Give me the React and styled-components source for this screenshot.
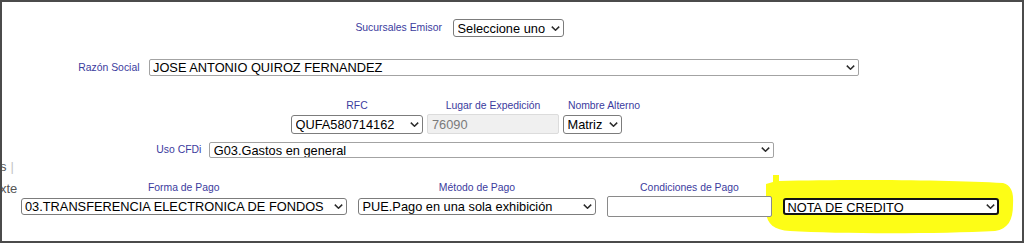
import styled, { createGlobalStyle } from 'styled-components';

const GlobalStyle = createGlobalStyle`
  html, body {
    margin: 0;
    padding: 0;
    background: #ffffff;
    font-family: "Liberation Sans", Arial, sans-serif;
  }
`;

const Frame = styled.div`
  position: relative;
  box-sizing: border-box;
  width: 1024px;
  height: 243px;
  border: 2px solid #4b4b4b;
  overflow: hidden;
  background: #ffffff;
`;

const FieldRow = styled.div`
  display: grid;
  grid-template-columns: ${(p) => p.$labelWidth}px auto;
  column-gap: ${(p) => p.$gap}px;
  align-items: center;
  margin-top: ${(p) => p.$top}px;
`;

const Label = styled.span`
  display: block;
  font-size: 10.4px;
  line-height: 12px;
  color: ${(p) => p.$color || '#3b3b9e'};
  text-align: ${(p) => p.$align || 'right'};
  white-space: nowrap;
`;

const SelectBox = styled.div`
  position: relative;
  z-index: 2;
  display: inline-flex;
  width: ${(p) => p.$w}px;
  height: ${(p) => p.$h}px;
`;

const NativeSelect = styled.select`
  appearance: none;
  -webkit-appearance: none;
  box-sizing: border-box;
  width: 100%;
  height: 100%;
  margin: 0;
  padding: 0 16px 0 ${(p) => (p.$focused ? 2.5 : 3.5)}px;
  font-family: "Liberation Sans", Arial, sans-serif;
  font-size: 12.8px;
  line-height: normal;
  color: #000000;
  background: #ffffff;
  border: ${(p) => (p.$focused ? '2px solid #151515' : `1px solid ${p.$wide ? '#a3a3a3' : '#7c7c7c'}`)};
  border-radius: ${(p) => (p.$wide ? 2 : 3)}px;
  outline: none;
`;

const Chevron = styled.svg`
  position: absolute;
  right: 4px;
  top: 50%;
  margin-top: -2.5px;
  pointer-events: none;
`;

function Select({ w, h, wide, focused, children }) {
  return (
    <SelectBox $w={w} $h={h}>
      <NativeSelect $wide={wide} $focused={focused} defaultValue="a">
        {children}
      </NativeSelect>
      <Chevron width="9" height="5" viewBox="0 0 9 5">
        <path d="M0.8 0.6 L4.5 4.2 L8.2 0.6" fill="none" stroke="#2b2b2b" strokeWidth="1.5" />
      </Chevron>
    </SelectBox>
  );
}

const TextInput = styled.input`
  position: relative;
  z-index: 2;
  box-sizing: border-box;
  width: ${(p) => p.$w}px;
  height: ${(p) => p.$h || 20}px;
  margin: 0;
  padding: 0 4px;
  font-family: "Liberation Sans", Arial, sans-serif;
  font-size: 12.8px;
  color: #000000;
  background: #ffffff;
  border: 1px solid #8a8a8a;
  border-radius: 2px;
  outline: none;

  &:disabled {
    color: #7a7a7a;
    background: #f0f0f0;
    border-color: #dcdcdc;
  }
`;

const ColumnsRow = styled.div`
  display: flex;
  gap: ${(p) => p.$gap}px;
  padding-left: ${(p) => p.$left}px;
  margin-top: ${(p) => p.$top}px;
`;

const Column = styled.div`
  display: flex;
  flex-direction: column;
  width: ${(p) => p.$w}px;
  align-items: ${(p) => p.$controlAlign || 'center'};
`;

const ControlSlot = styled.div`
  display: flex;
  align-items: center;
  height: ${(p) => p.$h}px;
  margin-top: ${(p) => p.$gap}px;
`;

const ColLabel = styled(Label)`
  align-self: stretch;
  text-align: center;
`;

const EdgeText = styled.span`
  position: absolute;
  left: -2px;
  top: ${(p) => p.$top}px;
  z-index: 3;
  font-size: 13px;
  line-height: 14px;
  color: #555555;
  white-space: nowrap;

  i {
    font-style: normal;
    color: #c4c4c4;
    margin-left: 4px;
  }
`;

const Highlight = styled.svg`
  position: absolute;
  left: 758px;
  top: 168px;
  z-index: 1;
  pointer-events: none;
`;

export default function App() {
  return (
    <>
      <GlobalStyle />
      <Frame>
        <Highlight width="262" height="70" viewBox="760 170 262 70">
          <path
            d="M 766 184 L 773 182 L 773 175 L 779 175 L 779 181 C 850 179, 950 180, 1003 183 C 1011 185, 1014 192, 1013 205 C 1013 220, 1008 229, 995 231 C 940 234, 840 234, 790 231 C 774 230, 767 224, 766 212 Z"
            fill="#fdfd16"
          />
        </Highlight>

        <EdgeText $top={158}>s<i>|</i></EdgeText>
        <EdgeText $top={180}>xte</EdgeText>

        <FieldRow $labelWidth={440} $gap={11} $top={17}>
          <Label>Sucursales Emisor</Label>
          <Select w={111} h={18}>
            <option value="a">Seleccione uno</option>
          </Select>
        </FieldRow>

        <FieldRow $labelWidth={137.5} $gap={9} $top={22}>
          <Label>Razón Social</Label>
          <Select w={710} h={17} wide>
            <option value="a">JOSE ANTONIO QUIROZ FERNANDEZ</option>
          </Select>
        </FieldRow>

        <ColumnsRow $left={289} $gap={4} $top={23.5}>
          <Column $w={132}>
            <ColLabel>RFC</ColLabel>
            <ControlSlot $h={20} $gap={2.5}>
              <Select w={132} h={19}>
                <option value="a">QUFA580714162</option>
              </Select>
            </ControlSlot>
          </Column>
          <Column $w={132}>
            <ColLabel>Lugar de Expedición</ColLabel>
            <ControlSlot $h={20} $gap={2.5}>
              <TextInput $w={132} $h={20} disabled defaultValue="76090" />
            </ControlSlot>
          </Column>
          <Column $w={82} $controlAlign="flex-start">
            <ColLabel>Nombre Alterno</ColLabel>
            <ControlSlot $h={20} $gap={2.5}>
              <Select w={59} h={19}>
                <option value="a">Matriz</option>
              </Select>
            </ControlSlot>
          </Column>
        </ColumnsRow>

        <FieldRow $labelWidth={199.3} $gap={8} $top={7.5}>
          <Label>Uso CFDi</Label>
          <Select w={565} h={16} wide>
            <option value="a">G03.Gastos en general</option>
          </Select>
        </FieldRow>

        <ColumnsRow $left={18.5} $gap={11} $top={24}>
          <Column $w={326.5}>
            <ColLabel>Forma de Pago</ColLabel>
            <ControlSlot $h={21} $gap={2.5}>
              <Select w={326.5} h={17.5}>
                <option value="a">03.TRANSFERENCIA ELECTRONICA DE FONDOS</option>
              </Select>
            </ControlSlot>
          </Column>
          <Column $w={238}>
            <ColLabel>Método de Pago</ColLabel>
            <ControlSlot $h={21} $gap={2.5}>
              <Select w={238} h={17.5}>
                <option value="a">PUE.Pago en una sola exhibición</option>
              </Select>
            </ControlSlot>
          </Column>
          <Column $w={165}>
            <ColLabel>Condiciones de Pago</ColLabel>
            <ControlSlot $h={21} $gap={2.5}>
              <TextInput $w={165} $h={20.5} defaultValue="" />
            </ControlSlot>
          </Column>
          <Column $w={216}>
            <ColLabel $color="#8d8d3a">CFDi</ColLabel>
            <ControlSlot $h={21} $gap={2.5}>
              <Select w={216} h={16.5} focused>
                <option value="a">NOTA DE CREDITO</option>
              </Select>
            </ControlSlot>
          </Column>
        </ColumnsRow>
      </Frame>
    </>
  );
}
